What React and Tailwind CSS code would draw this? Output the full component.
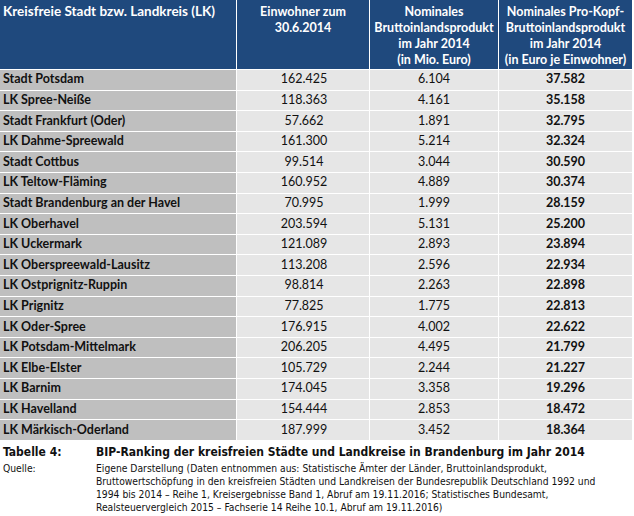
import React from "react";

const rows = [
  ["Stadt Potsdam", "162.425", "6.104", "37.582"],
  ["LK Spree-Neiße", "118.363", "4.161", "35.158"],
  ["Stadt Frankfurt (Oder)", "57.662", "1.891", "32.795"],
  ["LK Dahme-Spreewald", "161.300", "5.214", "32.324"],
  ["Stadt Cottbus", "99.514", "3.044", "30.590"],
  ["LK Teltow-Fläming", "160.952", "4.889", "30.374"],
  ["Stadt Brandenburg an der Havel", "70.995", "1.999", "28.159"],
  ["LK Oberhavel", "203.594", "5.131", "25.200"],
  ["LK Uckermark", "121.089", "2.893", "23.894"],
  ["LK Oberspreewald-Lausitz", "113.208", "2.596", "22.934"],
  ["LK Ostprignitz-Ruppin", "98.814", "2.263", "22.898"],
  ["LK Prignitz", "77.825", "1.775", "22.813"],
  ["LK Oder-Spree", "176.915", "4.002", "22.622"],
  ["LK Potsdam-Mittelmark", "206.205", "4.495", "21.799"],
  ["LK Elbe-Elster", "105.729", "2.244", "21.227"],
  ["LK Barnim", "174.045", "3.358", "19.296"],
  ["LK Havelland", "154.444", "2.853", "18.472"],
  ["LK Märkisch-Oderland", "187.999", "3.452", "18.364"],
];

export default function App() {
  return (
    <div className="w-[634px] h-[516px] bg-white overflow-hidden text-[#111]">
      <div className="grid grid-cols-[236px_132px_128px_133px] gap-px bg-white w-[632px] font-['Lato',sans-serif] text-[12.5px]">
        <div className="h-[69px] bg-[#1f497d] text-white font-bold text-[13.5px] px-[3px] pt-[3px] leading-[16px] whitespace-nowrap">
          Kreisfreie Stadt bzw. Landkreis (LK)
        </div>
        <div className="h-[69px] bg-[#1f497d] text-white font-bold text-center pt-[4px] leading-[16px]">
          Einwohner zum
          <br />
          30.6.2014
        </div>
        <div className="h-[69px] bg-[#1f497d] text-white font-bold text-center pt-[4px] leading-[16px]">
          Nominales
          <br />
          Bruttoinlandsprodukt
          <br />
          im Jahr 2014
          <br />
          (in Mio. Euro)
        </div>
        <div className="h-[69px] bg-[#1f497d] text-white font-bold text-center pt-[4px] leading-[16px] whitespace-nowrap">
          Nominales Pro-Kopf-
          <br />
          Bruttoinlandsprodukt
          <br />
          im Jahr 2014
          <br />
          (in Euro je Einwohner)
        </div>
        {rows.map((r) => (
          <React.Fragment key={r[0]}>
            <div className="h-[19.6px] bg-[#bfbfbf] font-bold px-[3px] flex items-center whitespace-nowrap">
              {r[0]}
            </div>
            <div className="h-[19.6px] bg-[#e6e6e6] flex items-center justify-center pl-[2px]">
              {r[1]}
            </div>
            <div className="h-[19.6px] bg-[#e6e6e6] flex items-center justify-center">
              {r[2]}
            </div>
            <div className="h-[19.6px] bg-[#e6e6e6] font-bold flex items-center justify-center">
              {r[3]}
            </div>
          </React.Fragment>
        ))}
      </div>
      <div className="font-['DejaVu_Sans_Condensed','DejaVu_Sans',sans-serif] [font-stretch:condensed] pt-[3px]">
        <div className="flex font-bold text-[12px] leading-[18px]">
          <div className="w-[96px] pl-[3px] shrink-0">Tabelle 4:</div>
          <div className="whitespace-nowrap">
            BIP-Ranking der kreisfreien Städte und Landkreise in Brandenburg im Jahr 2014
          </div>
        </div>
        <div className="flex text-[10.25px] leading-[13px] mt-[1px]">
          <div className="w-[96px] pl-[3px] shrink-0">Quelle:</div>
          <div className="w-[536px] whitespace-nowrap">
            Eigene Darstellung (Daten entnommen aus: Statistische Ämter der Länder, Bruttoinlandsprodukt,
            <br />
            Bruttowertschöpfung in den kreisfreien Städten und Landkreisen der Bundesrepublik Deutschland 1992 und
            <br />
            1994 bis 2014 – Reihe 1, Kreisergebnisse Band 1, Abruf am 19.11.2016; Statistisches Bundesamt,
            <br />
            Realsteuervergleich 2015 – Fachserie 14 Reihe 10.1, Abruf am 19.11.2016)
          </div>
        </div>
      </div>
    </div>
  );
}
